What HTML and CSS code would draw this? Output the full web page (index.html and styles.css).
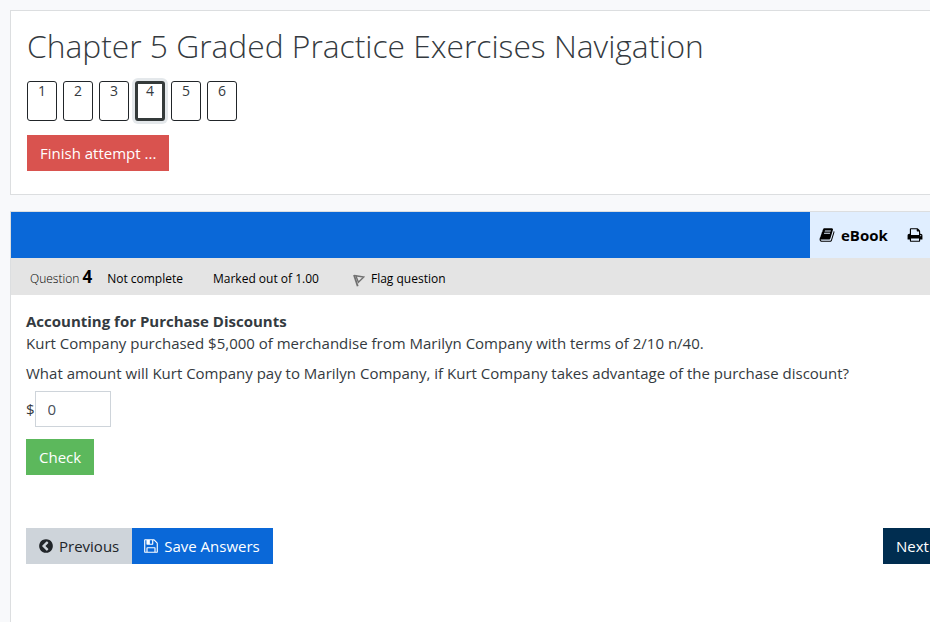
FILE: index.html
```html
<!DOCTYPE html>
<html lang="en">
<head>
    <meta charset="UTF-8">
    <title>Chapter 5 Graded Practice Exercises</title>
    <link rel="stylesheet" href="styles.css">
</head>
<body>
    <div class="page">
        <!-- Quiz navigation -->
        <section class="card quiz-nav">
            <h1>Chapter 5 Graded Practice Exercises Navigation</h1>
            <div class="qn-buttons">
                <a class="qn-button">1</a>
                <a class="qn-button">2</a>
                <a class="qn-button">3</a>
                <a class="qn-button current">4</a>
                <a class="qn-button">5</a>
                <a class="qn-button">6</a>
            </div>
            <button class="btn btn-danger">Finish attempt ...</button>
        </section>

        <!-- Question -->
        <main class="card">
            <div class="toolbar">
                <div class="toolbar-links">
                    <a class="tool"><svg class="icon" viewBox="0 0 1792 1792"><path d="M1703 478q40 57 18 129l-275 906q-19 64-76.500 107.500t-122.500 43.500h-923q-77 0-148.500-53.500t-99.500-131.500q-24-67-2-127 0-4 3-27t4-37q1-8-3-21.500t-3-19.500q2-11 8-21t16.500-23.500 16.500-23.500q23-38 45-91.500t30-91.500q3-10 .5-30t-.5-28q3-11 17-28t17-23q21-36 42-92t25-90q1-9-2.500-32t.5-28q4-13 22-30.500t22-22.500q19-26 42.500-84.500t27.500-96.500q1-8-3-25.500t-2-26.500q2-8 9-18t18-23 17-21q8-12 16.500-30.500t15-35 16-36 19.500-32 26.500-23.500 36-11.500 47.500 5.500l-1 3q38-9 51-9h761q74 0 114 56t18 130l-274 906q-36 119-71.500 153.500t-128.500 34.500h-869q-27 0-38 15-11 16-1 43 24 70 144 70h923q29 0 56-15.500t35-41.500l300-987q7-22 5-57 38 15 59 43zm-1064 2q-4 13 2 22.500t20 9.500h608q13 0 25.500-9.500t16.500-22.500l21-64q4-13-2-22.500t-20-9.500h-608q-13 0-25.500 9.500t-16.500 22.500zm-83 256q-4 13 2 22.500t20 9.500h608q13 0 25.500-9.500t16.500-22.500l21-64q4-13-2-22.500t-20-9.500h-608q-13 0-25.500 9.500t-16.500 22.500z"/></svg>eBook</a>
                    <a class="tool"><svg class="icon" viewBox="0 0 1792 1792"><path d="M448 1536h896v-256h-896v256zm0-640h896v-384h-160q-40 0-68-28t-28-68v-160h-640v640zm1152 64q0-26-19-45t-45-19-45 19-19 45 19 45 45 19 45-19 19-45zm128 0v416q0 13-9.500 22.500t-22.500 9.500h-224v160q0 40-28 68t-68 28h-960q-40 0-68-28t-28-68v-160h-224q-13 0-22.500-9.500t-9.500-22.500v-416q0-79 56.500-135.500t135.500-56.500h64v-544q0-40 28-68t68-28h672q40 0 88 20t76 48l152 152q28 28 48 76t20 88v256h64q79 0 135.500 56.500t56.500 135.500z"/></svg></a>
                </div>
            </div>
            <div class="info">
                <span class="number">Question <b>4</b></span>
                <span class="state">Not complete</span>
                <span class="grade">Marked out of 1.00</span>
                <span class="flag"><svg class="flag-icon" viewBox="0 0 12 13"><path d="M1 1l3.700 11.300" stroke-width="1.800"/><path d="M2.800 1.700l8 1.300-5.400 5.200z" stroke-width="1.400"/></svg>Flag question</span>
            </div>
            <div class="question">
                <h2>Accounting for Purchase Discounts</h2>
                <p>Kurt Company purchased $5,000 of merchandise from Marilyn Company with terms of 2/10 n/40.</p>
                <p>What amount will Kurt Company pay to Marilyn Company, if Kurt Company takes advantage of the purchase discount?</p>
                <div class="answer">
                    <label for="answer">$</label>
                    <input type="text" id="answer" value="0">
                </div>
                <button class="btn btn-success">Check</button>
                <div class="actions">
                    <button class="btn btn-secondary"><svg class="icon" viewBox="0 0 1792 1792"><path d="M1037 1395l102-102q19-19 19-45t-19-45l-307-307 307-307q19-19 19-45t-19-45l-102-102q-19-19-45-19t-45 19l-454 454q-19 19-19 45t19 45l454 454q19 19 45 19t45-19zm627-499q0 209-103 385.500t-279.500 279.500-385.500 103-385.500-103-279.500-279.500-103-385.500 103-385.500 279.500-279.500 385.500-103 385.500 103 279.500 279.500 103 385.500z"/></svg>Previous</button>
                    <button class="btn btn-primary"><svg class="icon" viewBox="0 0 1792 1792"><path d="M512 1536h768v-384h-768v384zm896 0h128v-896q0-14-10-38.500t-20-34.500l-281-281q-10-10-34-20t-39-10v416q0 40-28 68t-68 28h-576q-40 0-68-28t-28-68v-416h-128v1280h128v-416q0-40 28-68t68-28h832q40 0 68 28t28 68v416zm-384-928v-320q0-13-9.500-22.500t-22.500-9.500h-192q-13 0-22.500 9.500t-9.500 22.500v320q0 13 9.500 22.500t22.500 9.500h192q13 0 22.500-9.500t9.500-22.500zm640 32v928q0 40-28 68t-68 28h-1344q-40 0-68-28t-28-68v-1344q0-40 28-68t68-28h928q40 0 88 20t76 48l280 280q28 28 48 76t20 88z"/></svg>Save Answers</button>
                    <button class="btn btn-next">Next</button>
                </div>
            </div>
        </main>
    </div>
</body>
</html>
```
FILE: styles.css
```css
:root {
    --primary-color: #0a68d8;
    --text-color: #343a40;
}

* {
    box-sizing: border-box;
}

body {
    font-family: "Open Sans", sans-serif;
    font-size: 15px;
    line-height: 22px;
    margin: 0;
    background-color: #f8f9fb;
    color: var(--text-color);
    overflow: hidden;
}

/* wider than the window, the right edge is cut off */
.page {
    width: 975px;
    height: 622px;
    padding: 10px 0 0 10px;
    display: flex;
    flex-direction: column;
    gap: 16px;
}

.card {
    background: white;
    border: 1px solid #dcdee0;
}

.quiz-nav {
    height: 185px;
    flex: none;
    padding: 16px;
}

h1 {
    font-size: 31.76px;
    font-weight: 300;
    line-height: 38px;
    margin: 0 0 16px;
    white-space: nowrap;
}

.qn-buttons {
    display: flex;
    gap: 6px;
    margin-bottom: 14px;
}

.qn-button {
    width: 30px;
    height: 40px;
    border: 1px solid #212529;
    border-radius: 3px;
    font-size: 14px;
    line-height: 18px;
    text-align: center;
}

.qn-button.current {
    border: 3px solid #343a3a;
    line-height: 14px;
    box-shadow: 0 0 0 3px #e4e8eb;
}

.btn {
    height: 36px;
    padding: 0 13px;
    border: none;
    font-family: inherit;
    font-size: 15px;
    color: white;
    display: inline-flex;
    align-items: center;
    white-space: nowrap;
    cursor: pointer;
}

.btn-danger {
    background-color: #d9534f;
}

.btn-success {
    background-color: #5cb85c;
}

.btn-secondary {
    background-color: #ced4da;
    color: #212529;
    padding-left: 12px;
}

.btn-secondary .icon {
    margin-right: 5px;
}

.btn-primary {
    background-color: var(--primary-color);
    padding-left: 11px;
}

.btn-next {
    background-color: #002d50;
    width: 76px;
    margin-left: auto;
}

.icon {
    width: 16px;
    height: 16px;
    margin-right: 5px;
    fill: currentColor;
    flex: none;
}

main.card {
    flex: 1;
    border-bottom: none;
}

.toolbar {
    height: 46px;
    background-color: var(--primary-color);
    display: flex;
    justify-content: flex-end;
}

.toolbar-links {
    width: 164px;
    padding-left: 9px;
    background-color: #e0eeff;
    display: flex;
    align-items: center;
    gap: 19px;
}

.tool {
    display: flex;
    align-items: center;
    color: black;
    font-weight: bold;
}

.tool .icon {
    margin-right: 6px;
}

.info {
    height: 37px;
    padding: 0 19px;
    background-color: #e4e4e4;
    color: black;
    font-size: 12px;
    display: flex;
    align-items: baseline;
    line-height: 37px;
}

.number {
    font-weight: 300;
}

.number b {
    font-size: 17px;
    font-weight: 700;
}

.state {
    margin-left: 15px;
}

.grade {
    margin-left: 30px;
}

.flag {
    margin-left: 34px;
}

.flag-icon {
    width: 12px;
    height: 13px;
    margin-right: 6px;
    vertical-align: -4px;
    fill: none;
    stroke: #707070;
}

.question {
    padding: 15px;
}

h2 {
    font-size: 15px;
    line-height: 22px;
    margin: 0;
}

.question p {
    margin: 0 0 8px;
}

.answer {
    display: flex;
    align-items: center;
    margin: -1px 0 12px;
}

.answer input {
    width: 76px;
    height: 36px;
    padding: 0 12px;
    border: 1px solid #ced4da;
    font: inherit;
    color: #495057;
}

.actions {
    display: flex;
    margin-top: 53px;
}
```
